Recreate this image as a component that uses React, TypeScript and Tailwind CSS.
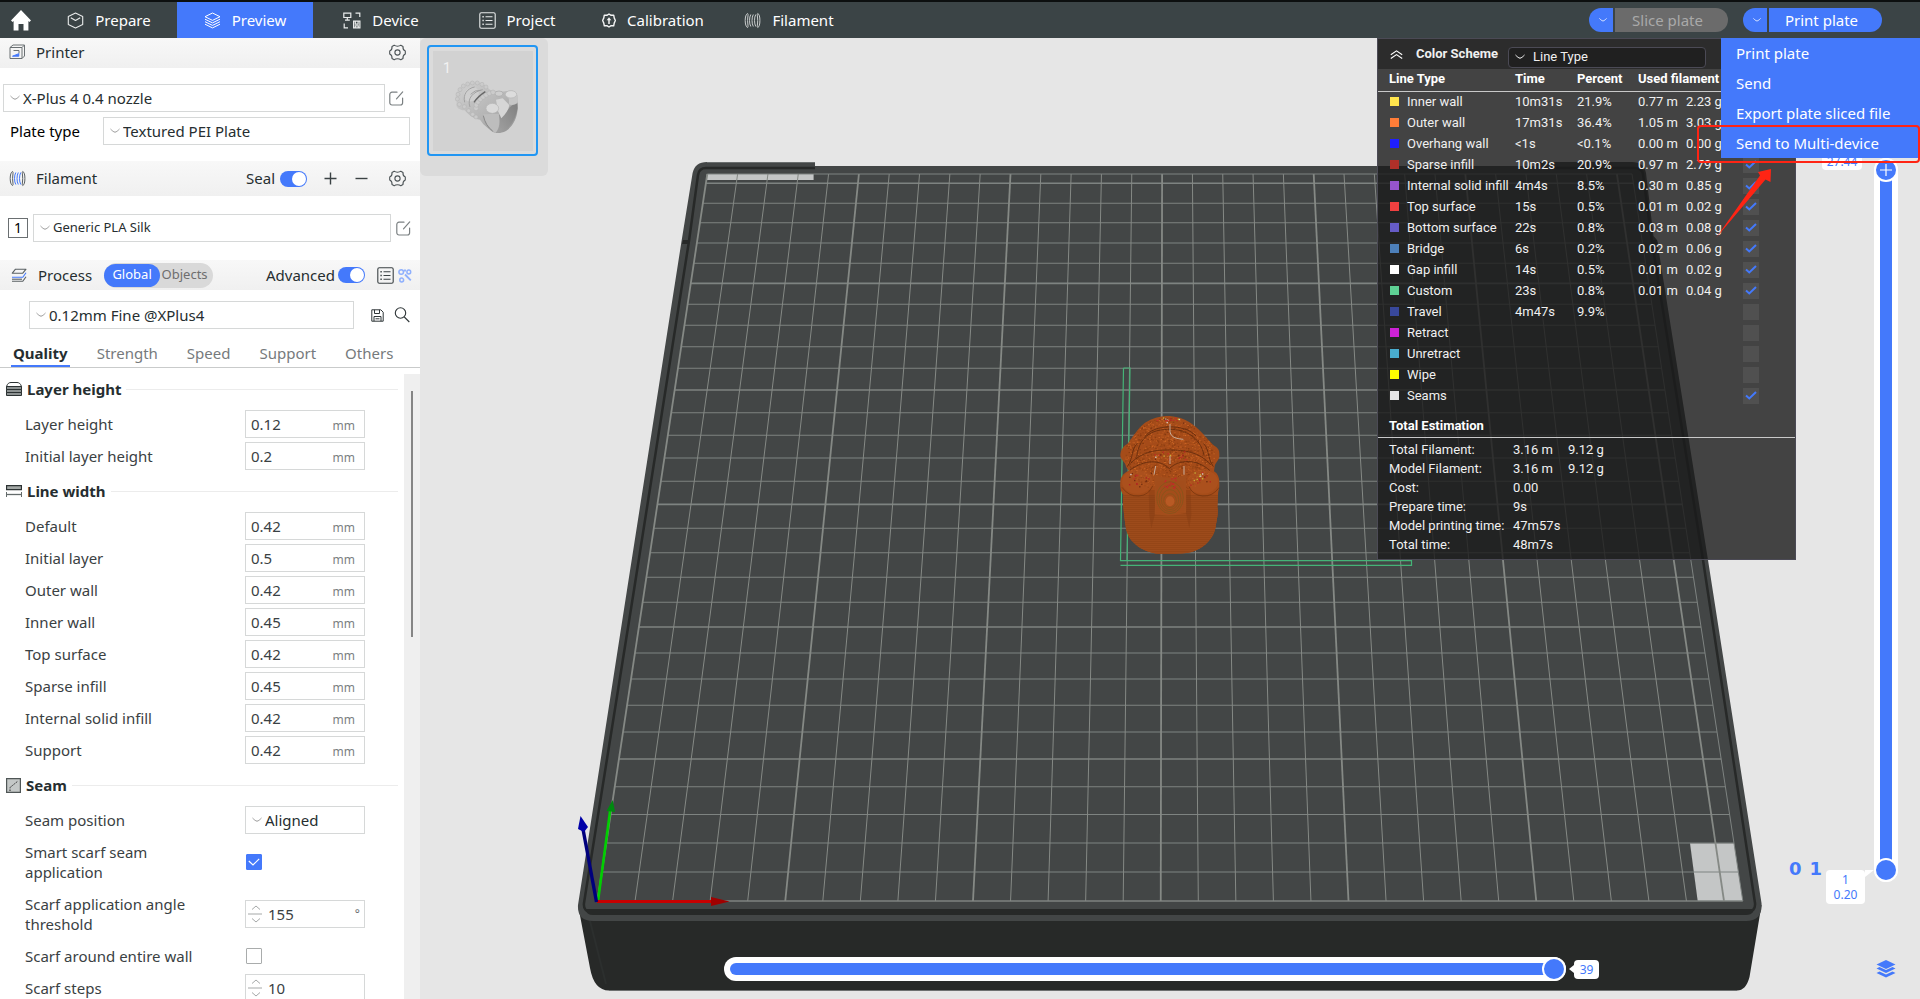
import React from "react";

/* ---------- icons ---------- */

type IconProps = { className?: string };

const HomeIcon = () => (
  <svg viewBox="0 0 20 21" className="h-[21px] w-5" fill="#fff">
    <path d="M10 0 20 10.500l-1.600 1.400-1-.9V20.500h-4.900v-6.500h-5V20.500H2.600V11l-1 .9L0 10.500z" />
  </svg>
);

const CubeIcon = () => (
  <svg viewBox="0 0 17 17" className="size-[17px]" fill="none" stroke="#e9ebeb" strokeWidth="1.1" strokeLinejoin="round">
    <path d="M8.500 1 15.700 4.400v8.200L8.500 16 1.300 12.600V4.400z" />
    <path d="M3.800 5.800 8.500 8.400l4.700-2.600" />
  </svg>
);

const StackIcon = () => (
  <svg viewBox="0 0 17 17" className="size-[17px]" fill="none" stroke="#fff" strokeWidth="1" strokeLinejoin="round">
    <path d="M8.500 1 16 4.700 8.500 8.400 1 4.700z" />
    <path d="M1 7.200l7.500 3.700L16 7.200M1 9.700l7.500 3.700L16 9.700M1 12.200l7.500 3.700 7.500-3.700" />
  </svg>
);

const DeviceIcon = () => (
  <svg viewBox="0 0 18 17" className="h-[17px] w-[18px]" fill="none" stroke="#e9ebeb" strokeWidth="1.2">
    <path d="M.8 1.200h7v4.300h-7zM4.300 5.500V8M2 8.200h4.800M12.500 1.200h4.300V5M1.200 11.500v4.300H5" />
    <path d="M10.600 9.200h6.300v6.600h-6.300zM12.300 9.200v3h2.800v-3M12.300 15.500v-1.600h3v1.600" />
  </svg>
);

const ListIcon = ({ className = "size-[17px] text-[#e9ebeb]" }: IconProps) => (
  <svg viewBox="0 0 17 17" className={className} fill="none" stroke="currentColor" strokeWidth="1.100">
    <rect x=".8" y=".8" width="15.400" height="15.400" rx="1.500" />
    <path d="M6.500 4.700h7M6.500 8.500h7M6.500 12.300h7" />
    <path d="M3.400 4.700h1.400M3.400 8.500h1.400M3.400 12.300h1.400" strokeWidth="1.500" />
  </svg>
);

const CalibrationIcon = () => (
  <svg viewBox="0 0 14 15" className="h-[15px] w-3.5" fill="none" stroke="#f4f5f5" strokeWidth="1.400">
    <path d="M4.900 2.300 7 1l2.100 1.300 2.600-.1.500 2.700 1.200 2.600-1.200 2.600-.5 2.700-2.600-.1L7 14l-2.100-1.300-2.600.1-.5-2.700L.6 7.500l1.200-2.600.5-2.700z" strokeLinejoin="round" />
    <path d="M7 11V6" strokeWidth="1.500" />
    <path d="M4.700 7.200 7 4.300l2.300 2.900z" fill="#f4f5f5" stroke="none" />
  </svg>
);

const SpoolIcon = ({ className = "text-[#c9cccc]", inner = "#c9cccc" }: { className?: string; inner?: string }) => (
  <svg viewBox="0 0 17 17" className={"size-[17px] " + className} fill="none" stroke="currentColor" strokeWidth="1">
    <path d="M3.600 1.500C2 2 1.200 5 1.200 8.500s.8 6.500 2.400 7c1-.5 0-3.500 0-7s1-6.500 0-7zM13.700 1.500c1.600.5 2.200 3.500 2.200 7s-.6 6.500-2.200 7c-.9-.5 0-3.500 0-7s-.9-6.500 0-7z" />
    <path d="M6.800 2.500c-1.700 2.500-1.700 9.500 0 12M9.300 2.500c-1.700 2.500-1.700 9.500 0 12M11.800 2.500c-1.700 2.500-1.700 9.500 0 12" stroke={inner} />
  </svg>
);

const PrinterIcon = () => (
  <svg viewBox="0 0 17 16" className="h-4 w-[17px]" fill="none" stroke="#6a7073" strokeWidth="1" strokeLinejoin="round">
    <path d="M1 3.500 4 1h11.500v11l-2.500 2.500H1zM1 3.500h12v11M13 3.500 15.500 1" />
    <path d="M4.500 6.500h5.500v3" />
    <path d="M3.500 12.200 9.800 9.700v2.500z" fill="#4479fb" stroke="#4479fb" />
  </svg>
);

const GearIcon = () => (
  <svg viewBox="0 0 17 17" className="size-[17px]" fill="none" stroke="#4c5356" strokeWidth="1.100" strokeLinejoin="round">
    <path d="M5.200 1.200c1 .9 2 1 3.300 1s2.300-.1 3.300-1l2.200 1.300c-.3 2.500.3 3.700 2.300 4.600v2.800c-2 .9-2.600 2.100-2.300 4.600l-2.200 1.300c-1-.9-2-1-3.300-1s-2.300.1-3.300 1L3 14.500C3.300 12 2.700 10.800.7 9.900V7.100C2.700 6.200 3.300 5 3 2.500z" />
    <circle cx="8.500" cy="8.500" r="2.600" />
  </svg>
);

const EditIcon = () => (
  <svg viewBox="0 0 15 15" className="size-[15px]" fill="none" stroke="#7b8082" strokeWidth="1.200" strokeLinecap="round">
    <path d="M8 1.200H3a2.200 2.200 0 0 0-2.200 2.200v8.400A2.200 2.200 0 0 0 3 14h8.400a2.200 2.200 0 0 0 2.200-2.200V7M13.700.9 7.500 7.800" />
  </svg>
);

const ProcessIcon = () => (
  <svg viewBox="0 0 16 15" className="h-[15px] w-4" fill="none" stroke="#5a6063" strokeWidth="1.100" strokeLinejoin="round">
    <path d="M4.500 1.200H15l-3.200 4H1.300z" />
    <path d="M15 4.700l-3.200 4.500H1" stroke="#4479fb" />
    <path d="M15 8.700l-3.200 4.600H1" />
    <path d="M1 11.200h10" />
  </svg>
);

const NodesIcon = () => (
  <svg viewBox="0 0 14 15" className="h-[15px] w-3.5" fill="none" stroke="#8fb0fd" strokeWidth="1.500">
    <circle cx="3.200" cy="4" r="2.300" />
    <circle cx="10.800" cy="4" r="1.900" />
    <circle cx="3.700" cy="12" r="1.900" />
    <path d="M7 1.500v2M7 6.500l5.800 5.800" strokeWidth="1.900" />
  </svg>
);

const SaveIcon = () => (
  <svg viewBox="0 0 13 13" className="size-[13px]" fill="none" stroke="#2f3638" strokeWidth="1">
    <path d="M.8.8h9l2.400 2.400v9H.8zM3.500.8v3.700h5V.8M3 12.200V7.500h7v4.700M4.500 9.800h4" />
  </svg>
);

const SearchIcon = () => (
  <svg viewBox="0 0 16 16" className="size-4" fill="none" stroke="#2f3638" strokeWidth="1.100">
    <circle cx="6.500" cy="6" r="5.200" />
    <path d="M10.300 10l5 5" />
  </svg>
);

const Chevron = ({ className = "h-1.5 w-2.5 text-[#9a9a9a]" }: IconProps) => (
  <svg viewBox="0 0 10 6" className={"shrink-0 " + className} fill="none" stroke="currentColor" strokeWidth="1">
    <path d="M.5 1C2 2.500 3.500 4 5 4.200 6.500 4 8 2.500 9.500 1" />
  </svg>
);

const LayerHeightIcon = () => (
  <svg viewBox="0 0 16 14" className="h-3.5 w-4" fill="#8d9292" stroke="#2c3233" strokeWidth="1">
    <path d="M.5 4.500C1.500 1.500 3 .5 5 .5h6c2 0 3.500 1 4.500 4z" fill="#fff" />
    <path d="M.5 4.500h15v3H.5zM.5 7.500h15v3H.5zM.5 10.500h15v3H.5z" />
  </svg>
);

const LineWidthIcon = () => (
  <svg viewBox="0 0 16 12" className="h-3 w-4" fill="none" stroke="#2c3233" strokeWidth="1">
    <path d="M.5.7h15v4H.5z" fill="#a3a8a6" strokeWidth="1.300" />
    <path d="M.5 7v5M15.500 7v5" stroke="#646b6b" />
    <path d="M1 9.500h14" stroke="#646b6b" strokeWidth="1.300" />
  </svg>
);

const SeamIcon = () => (
  <svg viewBox="0 0 15 15" className="size-[15px]">
    <path d="M.6.6h13.800v13.800H.6z" fill="#c4c8c7" stroke="#4f5656" strokeWidth="1.200" />
    <path d="M4 13V9.500L12 3" fill="none" stroke="#222" strokeWidth="1" strokeDasharray="1.500 1.200" />
  </svg>
);

const LayersSolidIcon = () => (
  <svg viewBox="0 0 20 18" className="h-[18px] w-5" fill="#4479fb">
    <path d="M10 0l9.500 4.500L10 9 .5 4.500z" />
    <path d="M.5 8.400l3-1.400L10 10l6.500-3 3 1.400L10 13z" />
    <path d="M.5 13l3-1.400L10 14.600l6.500-3 3 1.400L10 17.600z" />
  </svg>
);

/* ---------- small controls ---------- */

const Toggle = ({ label }: { label: string }) => (
  <input
    type="checkbox"
    role="switch"
    aria-label={label}
    defaultChecked
    className="h-4 w-[27px] appearance-none rounded-full bg-[#4479fb] p-px before:ml-auto before:block before:size-3.5 before:rounded-full before:bg-white before:content-['']"
  />
);

const Select = ({ label, value, className, id, text = "text-[15px]" }: { label: string; value: string; className: string; id?: string; text?: string }) => (
  <div className={"flex h-7 items-center gap-[3px] border border-[#d6d8d8] bg-white pl-1.5 " + className}>
    <Chevron />
    <select id={id} aria-label={label} className={"h-full min-w-0 flex-1 appearance-none bg-transparent text-[#262e30] outline-none " + text}>
      <option>{value}</option>
    </select>
  </div>
);

const Check = ({ id, checked }: { id: string; checked: boolean }) => (
  <span className="ml-px grid size-4 place-items-center">
    <input
      id={id}
      type="checkbox"
      defaultChecked={checked}
      className="col-start-1 row-start-1 size-4 appearance-none rounded-[1px] border border-[#a9acac] bg-white checked:border-[#4479fb] checked:bg-[#4479fb]"
    />
    {checked && (
      <svg viewBox="0 0 12 8" className="pointer-events-none col-start-1 row-start-1 h-2 w-3" fill="none" stroke="#fff" strokeWidth="1.200">
        <path d="M.8 3 5 7 11.200.8" />
      </svg>
    )}
  </span>
);

const Spin = ({ id, value, unit }: { id: string; value: string; unit?: string }) => (
  <div className="flex h-7 w-[120px] items-center border border-[#d6d8d8] bg-white pr-1 pl-0.5">
    <svg viewBox="0 0 14 22" className="h-[22px] w-3.5" fill="none" stroke="#a5a8a8" strokeWidth="1">
      <path d="M4 6.500 8 3l4 3.500M4 15.500 8 19l4-3.500M0 11h14" />
    </svg>
    <input id={id} defaultValue={value} className="ml-1.5 w-16 min-w-0 flex-1 bg-transparent text-[15px] outline-none" />
    {unit && <span className="text-xs leading-3 text-[#6b7072]">{unit}</span>}
  </div>
);

const NumberField = ({ id, value }: { id: string; value: string }) => (
  <div className="flex h-7 w-[120px] items-center border border-[#d6d8d8] bg-white pr-[9px] pl-[5px]">
    <input id={id} defaultValue={value} className="w-16 min-w-0 flex-1 bg-transparent text-[15px] outline-none" />
    <span className="pt-1 text-xs text-[#7b8082]">mm</span>
  </div>
);

const Row = ({ id, label, tall, children }: { id: string; label: string; tall?: boolean; children: React.ReactNode }) => (
  <div className={"flex items-center pl-[25px] " + (tall ? "h-12" : "h-7")}>
    <label htmlFor={id} className="w-[220px] shrink-0 pr-10 leading-5 whitespace-normal">
      {label}
    </label>
    {children}
  </div>
);

const Group = ({ icon, title, children }: { icon: React.ReactNode; title: string; children: React.ReactNode }) => (
  <section>
    <h3 className="flex h-[42px] items-center pr-1.5 pl-1.5 font-bold text-[#262e30]">
      {icon}
      <span className="pr-[5px] pl-[5px]">{title}</span>
      <span className="h-px flex-1 bg-[#ececec]" />
    </h3>
    <div className="flex flex-col gap-1">{children}</div>
  </section>
);

/* ---------- header ---------- */

const TABS = [
  { name: "Prepare", icon: <CubeIcon /> },
  { name: "Preview", icon: <StackIcon /> },
  { name: "Device", icon: <DeviceIcon /> },
  { name: "Project", icon: <ListIcon /> },
  { name: "Calibration", icon: <CalibrationIcon /> },
  { name: "Filament", icon: <SpoolIcon /> },
];

const SplitButton = ({ label, disabled }: { label: string; disabled?: boolean }) => (
  <div className="flex gap-0.5">
    <button aria-label={label + " options"} className="flex h-6 w-6 items-center justify-center rounded-l-full bg-[#4479fb] pl-1 text-white">
      <Chevron className="h-1.5 w-2" />
    </button>
    <button
      disabled={disabled}
      className={"h-6 w-[113px] rounded-r-full pr-2 text-[15px] leading-6 " + (disabled ? "bg-[#6b6b6b] text-[#a9a9a9]" : "bg-[#4479fb] text-white")}
    >
      {label}
    </button>
  </div>
);

const Header = () => (
  <header className="flex h-[38px] shrink-0 items-stretch border-t-2 border-[#0c0f0f] bg-[#3b4446] text-[15px] text-white">
    <button aria-label="Home" className="flex w-[41px] items-center justify-center">
      <HomeIcon />
    </button>
    <nav className="flex">
      {TABS.map((t) => (
        <button key={t.name} className={"flex w-[136px] items-center justify-center gap-[11px] " + (t.name === "Preview" ? "bg-[#4479fb]" : "")}>
          {t.icon}
          {t.name}
        </button>
      ))}
    </nav>
    <div className="ml-auto flex items-center gap-[15px] pr-[38px]">
      <SplitButton label="Slice plate" disabled />
      <SplitButton label="Print plate" />
    </div>
  </header>
);

/* ---------- sidebar ---------- */

const BAND = "flex shrink-0 items-center bg-linear-to-b from-[#f8f8f8] to-[#f0f0f0] text-[#262e30]";
const TAB = "h-8 border-b-2 pt-1 leading-7";

const LINE_WIDTHS: [string, string][] = [
  ["Default", "0.42"],
  ["Initial layer", "0.5"],
  ["Outer wall", "0.42"],
  ["Inner wall", "0.45"],
  ["Top surface", "0.42"],
  ["Sparse infill", "0.45"],
  ["Internal solid infill", "0.42"],
  ["Support", "0.42"],
];

const Sidebar = () => (
  <aside className="flex w-[420px] shrink-0 flex-col overflow-hidden bg-white text-[15px] text-[#3a4143]">
    <div className={BAND + " h-[30px] pr-3.5 pb-0.5 pl-[9px]"}>
      <PrinterIcon />
      <h2 className="flex-1 pl-2.5">Printer</h2>
      <button aria-label="Printer settings">
        <GearIcon />
      </button>
    </div>
    <div className="flex flex-col gap-[5px] py-4">
      <div className="flex items-center gap-1 pl-[3px]">
        <Select label="Printer preset" value="X-Plus 4 0.4 nozzle" className="w-[382px]" />
        <button aria-label="Edit printer preset">
          <EditIcon />
        </button>
      </div>
      <div className="flex items-center pl-2.5">
        <label htmlFor="plate" className="w-[93px] text-black">
          Plate type
        </label>
        <Select id="plate" label="Plate type" value="Textured PEI Plate" className="w-[307px]" />
      </div>
    </div>

    <div className={BAND + " h-[35px] pr-3.5 pl-[9px]"}>
      <SpoolIcon className="text-[#5a6063]" inner="#4479fb" />
      <h2 className="flex-1 pl-2.5">Filament</h2>
      <span className="pr-[5px]">Seal</span>
      <Toggle label="Seal" />
      <button aria-label="Add filament" className="ml-[17px]">
        <svg viewBox="0 0 13 13" className="size-[13px]" stroke="#3b4244" strokeWidth="1.400">
          <path d="M.5 6.500h12M6.500.5v12" />
        </svg>
      </button>
      <button aria-label="Remove filament" className="mr-[21px] ml-[18px]">
        <svg viewBox="0 0 13 13" className="size-[13px]" stroke="#3b4244" strokeWidth="1.400">
          <path d="M.5 6.500h12" />
        </svg>
      </button>
      <button aria-label="Filament settings">
        <GearIcon />
      </button>
    </div>
    <div className="flex items-center py-[18px] pl-2">
      <span className="mr-[5px] flex size-5 items-center justify-center border border-[#6a6f71] text-sm leading-4 text-black">1</span>
      <Select label="Filament preset" value="Generic PLA Silk" className="mr-[5px] w-[358px]" text="text-[13px]" />
      <button aria-label="Edit filament preset">
        <EditIcon />
      </button>
    </div>

    <div className={BAND + " h-[30px] pr-2 pl-[11px]"}>
      <ProcessIcon />
      <h2 className="pl-[11px]">Process</h2>
      <div className="ml-3 flex h-[25px] w-[109px] items-center rounded-full bg-[#d9d9d9] text-[13px]">
        <button className="h-[23px] w-14 rounded-full bg-[#4479fb] text-white">Global</button>
        <button className="flex-1 pr-1 text-[#6e6e6e]">Objects</button>
      </div>
      <span className="mr-[3px] ml-auto">Advanced</span>
      <Toggle label="Advanced" />
      <button aria-label="Parameter list" className="mr-1 ml-3">
        <ListIcon className="size-[17px] text-[#3b4244]" />
      </button>
      <button aria-label="Compare presets">
        <NodesIcon />
      </button>
    </div>
    <div className="flex items-center pt-[11px] pl-[29px]">
      <Select label="Process preset" value="0.12mm Fine @XPlus4" className="mr-[17px] w-[325px]" />
      <button aria-label="Save preset" className="mr-2.5">
        <SaveIcon />
      </button>
      <button aria-label="Search settings">
        <SearchIcon />
      </button>
    </div>
    <nav className="flex h-[39px] shrink-0 items-end gap-[27px] border-b border-[#c9cbcb] pl-[11px] text-[#767a7c]">
      <button className={TAB + " border-[#4479fb] px-0.5 font-bold text-[#262e30]"}>Quality</button>
      <button className={TAB + " border-transparent"}>Strength</button>
      <button className={TAB + " border-transparent pl-0.5"}>Speed</button>
      <button className={TAB + " border-transparent pl-0.5"}>Support</button>
      <button className={TAB + " border-transparent pl-0.5"}>Others</button>
    </nav>

    <div className="flex min-h-0 flex-1">
      <div className="min-w-0 flex-1 overflow-hidden">
        <Group icon={<LayerHeightIcon />} title="Layer height">
          <Row id="lh" label="Layer height">
            <NumberField id="lh" value="0.12" />
          </Row>
          <Row id="ilh" label="Initial layer height">
            <NumberField id="ilh" value="0.2" />
          </Row>
        </Group>
        <Group icon={<LineWidthIcon />} title="Line width">
          {LINE_WIDTHS.map(([name, value]) => (
            <Row key={name} id={"w-" + name} label={name}>
              <NumberField id={"w-" + name} value={value} />
            </Row>
          ))}
        </Group>
        <Group icon={<SeamIcon />} title="Seam">
          <Row id="seam" label="Seam position">
            <Select id="seam" label="Seam position" value="Aligned" className="w-[120px]" />
          </Row>
          <Row id="smart" label="Smart scarf seam application" tall>
            <Check id="smart" checked />
          </Row>
          <Row id="angle" label="Scarf application angle threshold" tall>
            <Spin id="angle" value="155" unit="°" />
          </Row>
          <Row id="around" label="Scarf around entire wall">
            <Check id="around" checked={false} />
          </Row>
          <Row id="steps" label="Scarf steps">
            <Spin id="steps" value="10" />
          </Row>
        </Group>
      </div>
      <div className="mt-1.5 flex w-4 justify-center bg-[#efefef]">
        <div className="mt-[17px] h-[246px] w-0.5 bg-[#858585]" />
      </div>
    </div>
  </aside>
);

/* ---------- build plate ---------- */

const GRID_Y = [
  901, 872, 843, 814.500, 786.700, 759, 732, 705.300, 679, 653, 627, 602.300, 577.200, 552.700, 528.300, 504.400, 481.300, 458, 435.300, 412.700, 390, 368.300, 346.700,
  325.300, 304.300, 283.400, 263.300, 243, 222.700, 203.300, 183.300,
];
const leftAt = (y: number) => 707.3 - ((y - 174) / 727) * 109.8;
const rightAt = (y: number) => 1632 + ((y - 174) / 727) * 110.8;

const noise = (n: number) => {
  const v = Math.sin(n * 127.1) * 43758.5453;
  return v - Math.floor(v);
};
const TONES = ["#d9702c", "#8a3f14", "#b85a20", "#7a3510", "#c96024"];
const specks = Array.from({ length: 1300 }, (_, i) => {
  const a = noise(i + 1) * Math.PI * 2;
  const r = Math.sqrt(noise(i + 500));
  return { x: 237 + Math.cos(a) * r * 134, y: 165 + Math.sin(a) * r * 112, c: TONES[i % 5] };
}).filter((s) => s.y < 275);
const brights = Array.from({ length: 90 }, (_, i) => {
  const spots = [
    [147, 237, 36, 22],
    [332, 237, 36, 22],
    [240, 247, 18, 16],
    [240, 165, 48, 12],
    [240, 62, 40, 10],
  ];
  const [cx, cy, rx, ry] = spots[i % 5];
  return {
    x: cx + (noise(i + 7) - 0.5) * 2 * rx,
    y: cy + (noise(i + 77) - 0.5) * 2 * ry,
    c: i % 5 === 2 ? "#c22a2a" : ["#d8d2cc", "#c22a2a", "#6b2a10", "#b02222", "#c9b43a"][Math.floor(noise(i + 3) * 5)],
  };
});

const PrintedModel = () => (
  <g transform="translate(1090 400) scale(.33333)">
    <defs>
      <pattern id="layers" width="8" height="6" patternUnits="userSpaceOnUse">
        <path d="M0 1.500h8" stroke="#a85120" strokeWidth="2" opacity=".55" />
      </pattern>
      <clipPath id="body">
        <path d="M238 48C270 50 300 62 330 92 350 112 365 132 374 138 388 145 390 160 388 172 384 184 376 188 374 200L372 214C386 222 390 240 388 262 382 280 384 300 382 320 386 340 380 360 376 385 370 415 345 440 320 450 300 460 280 460 258 461H215C190 462 165 452 145 440 120 422 112 405 108 385 102 350 98 310 100 285 88 270 90 250 92 238 96 222 110 215 116 212L108 200C106 185 92 182 91 165 92 150 100 138 112 132 130 110 140 88 165 68 190 52 215 46 238 48z" />
      </clipPath>
    </defs>
    <g clipPath="url(#body)">
      <path d="M80 40h320v430H80z" fill="#a54c19" />
      <path d="M80 285h320v190H80z" fill="#954617" />
      <path d="M80 285h320v190H80z" fill="url(#layers)" />
      <path d="M176 270h26l-4 60-14 55-6-40zM302 270h-20l4 60 12 55 6-40z" fill="#7d3811" opacity=".35" />
      {specks.map((s, i) => (
        <rect key={i} x={s.x} y={s.y} width="4" height="3" fill={s.c} opacity=".7" />
      ))}
      <g fill="none" stroke="#5e290c" strokeWidth="3" opacity=".8">
        <path d="M140 170C150 100 195 88 240 88S330 110 342 165" />
        <path d="M122 190C160 152 200 150 240 150S330 155 362 195" />
        <path d="M120 210C165 178 210 178 238 206 266 178 320 175 360 212" />
        <path d="M165 110C190 72 285 70 318 108M112 200c20-30 10-50 30-70M370 200c-20-30-10-50-30-70" />
      </g>
      <ellipse cx="142" cy="245" rx="46" ry="36" fill="#b55822" opacity=".4" />
      <ellipse cx="338" cy="245" rx="46" ry="36" fill="#b55822" opacity=".4" />
      <path d="M96 262q20 28 50 26t42-30M388 262q-20 28-50 26t-42-30" fill="none" stroke="#6d300e" strokeWidth="3" opacity=".6" />
      <path d="M192 222q48 24 98 0c-4 40 0 80-2 116q-46 14-94 4c2-40 0-80-2-120z" fill="#a34e1c" />
      <g fill="none" stroke="#6f5a1a" strokeWidth="2" opacity=".7">
        <ellipse cx="240" cy="302" rx="19" ry="21" />
        <ellipse cx="240" cy="299" rx="26" ry="30" />
        <ellipse cx="240" cy="296" rx="33" ry="39" />
        <ellipse cx="240" cy="293" rx="40" ry="48" />
      </g>
      <ellipse cx="240" cy="304" rx="13" ry="15" fill="#b85a24" />
      {brights.map((s, i) => (
        <rect key={i} x={s.x} y={s.y} width="4" height="4" fill={s.c} />
      ))}
      <path d="M240 72v24c4 18 22 20 40 22M240 168v24M197 198l-5 26M282 198v26" fill="none" stroke="#cfc5bd" strokeWidth="2.500" />
    </g>
  </g>
);

const Scene = () => (
  <svg viewBox="420 38 1500 961" preserveAspectRatio="xMidYMid slice" className="absolute inset-0 size-full" aria-hidden="true">
    {/* tray body */}
    <path d="M578 905 590 968Q594 990.500 609 990.500H1737Q1746 990.500 1749.500 977L1761.500 905z" fill="#272928" />
    <path d="M609 990.500H1737" stroke="#6d7070" />
    <path d="M590 921 606 984" stroke="#2c2f2e" strokeWidth="2" />
    <path
      d="M707 162H815V166H1535V162H1632Q1644 162 1646 173L1653.500 236 1657 240 1708 560 1761.500 903Q1763 921 1746 921H593Q577 921 578 905L597.500 780 627 590 681.400 242 692.600 173Q695 162 707 162z"
      fill="#434646"
    />
    <path d="M815 168H706Q699 168 698 175L689 241 634 590 584 903Q583 912 592 912H1746Q1756 912 1755 903L1703 560 1652 242 1643 174Q1642 168 1634 168H1552" fill="none" stroke="#272928" strokeWidth="2.500" />
    <path d="M586 909H1753L1753 912Q1751 915 1746 915H593Q586 915 586 909z" fill="#272928" />
    <path d="M683 240h6l-1 4h-6zM1651 240h6l1 4h-6z" fill="#272928" />
    <path d="M707 162.500H815" stroke="#6a6e6e" />

    {/* corner patches */}
    <path d="M707 174H813.600V180H706z" fill="#c4c6c6" />
    <path d="M1690 843.300H1734L1742.800 901H1697.700z" fill="#c4c6c6" />

    {/* grid */}
    <g fill="none">
      {GRID_Y.map((y, i) => (
        <path key={y} d={`M${leftAt(y)} ${y}H${rightAt(y)}`} stroke="#7e8381" strokeWidth={i % 5 === 0 ? 1.6 : 1.1} />
      ))}
      {Array.from({ length: 31 }, (_, i) => (
        <path key={i} d={`M${707.3 + 30.32 * i} 174L${597.5 + 37.55 * i} 901`} stroke="#858985" strokeWidth={i % 5 === 0 ? 1.8 : 1} />
      ))}
      <path d="M707.300 174H1632L1742.800 901" stroke="#7e8381" />
    </g>

    {/* purge line and prime outline */}
    <path d="M1123.500 368H1130L1127 560.500M1123.500 368 1120.500 560.700H1411.500V565.300H1120.500" fill="none" stroke="#45b377" strokeWidth="1.200" />
    <PrintedModel />

    {/* axes */}
    <path d="M598 901 610.500 808" stroke="#00cf00" strokeWidth="2.600" />
    <path d="M612.700 800 615 812 606.500 811z" fill="#008a10" />
    <path d="M597 901.500H712" stroke="#c80000" strokeWidth="3.200" />
    <path d="M729.600 901.500 711 897v9z" fill="#a00000" />
    <path d="M596.500 902 583 829" stroke="#00007c" strokeWidth="3.400" />
    <path d="M580.500 816 588 827 584 832 578 829z" fill="#0000a8" />
  </svg>
);

const BEADS = [
  [84, 118],
  [90, 104],
  [100, 93],
  [113, 87],
  [127, 84],
  [142, 84],
  [156, 88],
  [168, 96],
  [82, 132],
  [88, 148],
  [103, 155],
  [116, 167],
  [128, 178],
  [138, 186],
];
const COLLAR = [
  [138, 160],
  [139, 150],
  [144, 141],
  [151, 133],
  [159, 126],
  [168, 120],
  [178, 115],
  [189, 112],
];

const StoneModel = () => (
  <g transform="translate(-3 4) scale(.33333)">
    <defs>
      <linearGradient id="stone" x1="0" y1="0" x2="1" y2="1">
        <stop offset="0" stopColor="#d2d2d2" />
        <stop offset=".55" stopColor="#b5b5b5" />
        <stop offset="1" stopColor="#8e8e8e" />
      </linearGradient>
      <linearGradient id="base" x1="0" y1="1" x2="1" y2="0">
        <stop offset="0" stopColor="#a2a2a2" />
        <stop offset="1" stopColor="#7f7f7f" />
      </linearGradient>
    </defs>
    <path
      d="M77 122C80 104 92 90 110 86 130 80 150 82 164 90L180 104C190 112 200 108 208 108 222 112 226 106 240 107 256 106 262 114 262 126L263 160C262 190 248 215 228 228 210 236 196 236 184 228L160 208 150 194C130 192 116 180 104 166 84 164 76 154 80 144z"
      fill="url(#stone)"
    />
    <path d="M205 180C212 205 208 225 198 234 232 232 256 200 263 160L262 140C245 150 235 160 228 170z" fill="url(#base)" />
    <path d="M198 134 218 130 238 150C236 165 226 178 214 190L204 168z" fill="#d6d6d6" />
    <path d="M160 178C166 200 176 222 196 234 210 220 210 196 206 176z" fill="#bdbdbd" />
    <path d="M160 182q6 30 28 46" fill="none" stroke="#8a8a8a" strokeWidth="3" />
    <path d="M236 148q4-20-8-32 26-16 36 8l-1 20q-14 10-27 4z" fill="#c6c6c6" />
    <ellipse cx="187" cy="160" rx="19" ry="15" fill="#dadada" stroke="#b4b4b4" strokeWidth="2" />
    <ellipse cx="243" cy="118" rx="17" ry="11" fill="#dcdcdc" stroke="#b6b6b6" strokeWidth="2" />
    <ellipse cx="207" cy="116" rx="12" ry="8" fill="#cecece" stroke="#a8a8a8" strokeWidth="2" />
    <ellipse cx="124" cy="118" rx="24" ry="20" fill="#cfcfcf" transform="rotate(-40 124 118)" />
    <g fill="#cbcbcb" stroke="#b2b2b2" strokeWidth="1.500">
      {BEADS.map(([x, y]) => (
        <circle key={x + "-" + y} cx={x} cy={y} r="6" />
      ))}
      {COLLAR.map(([x, y]) => (
        <circle key={x + "-" + y} cx={x} cy={y} r="7" />
      ))}
    </g>
    <g fill="none" stroke="#a2a2a2" strokeWidth="3">
      <path d="M104 142C98 118 112 100 134 96M120 156C110 130 130 110 158 104" />
      <path d="M122 118q12-14 30-12" />
    </g>
    <path d="M132 142Q144 124 166 110" fill="none" stroke="#666" strokeWidth="4" />
  </g>
);

const Thumbnail = () => (
  <button aria-label="Plate 1" className="absolute top-0 left-0 flex h-[138px] w-32 items-start rounded-md bg-[#dbdbdb] pt-[7px] pl-[7px]">
    <span className="flex size-[111px] items-center justify-center rounded border-2 border-[#2196f3]">
      <svg viewBox="0 0 100 100" className="size-[100px] bg-[#d2d2d2]">
        <text x="10" y="22" fill="#f2f2f2" fontSize="14" fontFamily="Roboto, sans-serif">
          1
        </text>
        <StoneModel />
      </svg>
    </span>
  </button>
);

/* ---------- legend ---------- */

const LEGEND: { c: string; n: string; t?: string; p?: string; m?: string; g?: string; on: boolean }[] = [
  { c: "#ffe54d", n: "Inner wall", t: "10m31s", p: "21.9%", m: "0.77 m", g: "2.23 g", on: true },
  { c: "#ff7d38", n: "Outer wall", t: "17m31s", p: "36.4%", m: "1.05 m", g: "3.03 g", on: true },
  { c: "#1f1fff", n: "Overhang wall", t: "<1s", p: "<0.1%", m: "0.00 m", g: "0.00 g", on: true },
  { c: "#b03029", n: "Sparse infill", t: "10m2s", p: "20.9%", m: "0.97 m", g: "2.79 g", on: true },
  { c: "#9654cc", n: "Internal solid infill", t: "4m4s", p: "8.5%", m: "0.30 m", g: "0.85 g", on: true },
  { c: "#f04040", n: "Top surface", t: "15s", p: "0.5%", m: "0.01 m", g: "0.02 g", on: true },
  { c: "#665cc7", n: "Bottom surface", t: "22s", p: "0.8%", m: "0.03 m", g: "0.08 g", on: true },
  { c: "#4d80ba", n: "Bridge", t: "6s", p: "0.2%", m: "0.02 m", g: "0.06 g", on: true },
  { c: "#ffffff", n: "Gap infill", t: "14s", p: "0.5%", m: "0.01 m", g: "0.02 g", on: true },
  { c: "#5ed194", n: "Custom", t: "23s", p: "0.8%", m: "0.01 m", g: "0.04 g", on: true },
  { c: "#38489b", n: "Travel", t: "4m47s", p: "9.9%", on: false },
  { c: "#cd22d6", n: "Retract", on: false },
  { c: "#49adcf", n: "Unretract", on: false },
  { c: "#ffff00", n: "Wipe", on: false },
  { c: "#e6e6e6", n: "Seams", on: true },
];

const TOTALS: [string, string, string?][] = [
  ["Total Filament:", "3.16 m", "9.12 g"],
  ["Model Filament:", "3.16 m", "9.12 g"],
  ["Cost:", "0.00"],
  ["Prepare time:", "9s"],
  ["Model printing time:", "47m57s"],
  ["Total time:", "48m7s"],
];

const Legend = () => (
  <div className="absolute top-0 right-[124px] w-[419px] border border-[#4b4a55] bg-[#1a1a1a]/80 font-[Roboto,sans-serif] text-[13px] text-[#f0f0f0]">
    <div className="flex h-[30px] items-center bg-[#222]/70 pl-3">
      <button aria-label="Collapse legend">
        <svg viewBox="0 0 13 9" className="h-[9px] w-[13px]" fill="none" stroke="#fff" strokeWidth="1.100">
          <path d="M.8 4.700 6.500.8l5.700 3.900M.8 8.500l5.700-3.900 5.700 3.900" />
        </svg>
      </button>
      <label htmlFor="scheme" className="w-[92px] pl-[13px] font-bold whitespace-nowrap">
        Color Scheme
      </label>
      <div className="mt-1.5 ml-[13px] flex h-[21px] w-[198px] items-center rounded border border-[#4b4a55] bg-[#202020] pl-1.5">
        <Chevron className="h-1.5 w-2.5 text-white" />
        <select id="scheme" className="flex-1 appearance-none bg-transparent pl-2 outline-none">
          <option>Line Type</option>
        </select>
      </div>
    </div>
    <table className="w-full table-fixed text-left leading-5 whitespace-nowrap">
      <colgroup>
        <col className="w-[137px]" />
        <col className="w-[62px]" />
        <col className="w-[61px]" />
        <col className="w-12" />
        <col className="w-[57px]" />
        <col />
      </colgroup>
      <thead>
        <tr className="h-[22px] border-b border-[#c9c9c9] align-top leading-[19px] text-white">
          <th className="py-0 pl-[11px]">Line Type</th>
          <th className="p-0">Time</th>
          <th className="p-0">Percent</th>
          <th className="p-0" colSpan={2}>
            Used filament
          </th>
          <th />
        </tr>
      </thead>
      <tbody>
        {LEGEND.map((r, i) => (
          <tr key={r.n} className="h-[21px]">
            <td className="py-0 pl-3">
              <label htmlFor={"show-" + i} className="flex items-center gap-2">
                <span className="size-[9px]" style={{ backgroundColor: r.c }} />
                {r.n}
              </label>
            </td>
            <td className="p-0">{r.t}</td>
            <td className="p-0">{r.p}</td>
            <td className="p-0">{r.m}</td>
            <td className="p-0">{r.g}</td>
            <td className="p-0">
              <span className="grid size-4 place-items-center">
                <input id={"show-" + i} type="checkbox" defaultChecked={r.on} className="col-start-1 row-start-1 size-4 appearance-none bg-[#505050]" />
                {r.on && (
                  <svg viewBox="0 0 12 9" className="pointer-events-none col-start-1 row-start-1 h-[9px] w-3" fill="none" stroke="#4479fb" strokeWidth="2">
                    <path d="M1 4.500 4.300 7.500 11 1" />
                  </svg>
                )}
              </span>
            </td>
          </tr>
        ))}
      </tbody>
    </table>
    <h4 className="flex h-8 items-end border-b border-[#c9c9c9] pb-px pl-[11px] leading-5 font-bold text-white">Total Estimation</h4>
    <table className="mt-0.5 mb-[5px] text-left leading-[19px] whitespace-nowrap">
      <tbody>
        {TOTALS.map(([k, a, b]) => (
          <tr key={k}>
            <th className="w-[135px] p-0 pl-[11px] font-normal">{k}</th>
            <td className="w-[55px] p-0">{a}</td>
            <td className="p-0">{b}</td>
          </tr>
        ))}
      </tbody>
    </table>
  </div>
);

/* ---------- sliders ---------- */

const V_RANGE =
  "col-start-1 row-start-1 h-full w-6 appearance-none bg-transparent [writing-mode:vertical-lr] [direction:rtl] [&::-webkit-slider-thumb]:size-6 [&::-webkit-slider-thumb]:appearance-none [&::-webkit-slider-thumb]:rounded-full [&::-webkit-slider-thumb]:border-2 [&::-webkit-slider-thumb]:border-white [&::-webkit-slider-thumb]:bg-[#4479fb]";

const Sliders = () => (
  <>
    <div className="absolute top-[120px] right-[22px] bottom-[117px] grid w-6 justify-items-center rounded-full bg-white">
      <span className="col-start-1 row-start-1 my-3 w-3 bg-[#4479fb]" />
      <input type="range" aria-label="Lowest layer" min={1} max={228} defaultValue={1} className={V_RANGE} />
      <input type="range" aria-label="Highest layer" min={1} max={228} defaultValue={228} className={V_RANGE} />
      <svg viewBox="0 0 24 24" className="pointer-events-none col-start-1 row-start-1 size-6" stroke="#fff" strokeWidth="1.200">
        <path d="M6 12h12M12 6v12" />
      </svg>
    </div>
    <div className="absolute top-[116px] right-[58px] w-10 rounded-sm bg-white text-center text-xs leading-4 text-[#4479fb]">27.44</div>
    <div className="absolute right-[55px] bottom-[95px] w-[39px] rounded-sm bg-white py-0.5 text-center text-xs leading-[15px] text-[#4479fb]">
      1
      <br />
      0.20
      <svg viewBox="0 0 10 7" className="absolute top-0 left-full h-[7px] w-2.5" fill="#fff">
        <path d="M0 0H9L0 7z" />
      </svg>
    </div>
    <div className="absolute right-[98px] bottom-[118px] flex gap-2 font-['DejaVu_Sans',sans-serif] text-lg leading-[25px] font-bold text-[#4479fb]">
      <span>0</span>
      <span>1</span>
    </div>
    <div className="absolute bottom-[18px] left-[304px] flex items-center">
      <input
        type="range"
        aria-label="Move"
        min={0}
        max={39}
        defaultValue={39}
        className="h-6 w-[842px] appearance-none rounded-full bg-white pl-1.5 [&::-webkit-slider-runnable-track]:h-3 [&::-webkit-slider-runnable-track]:rounded-full [&::-webkit-slider-runnable-track]:bg-[#4479fb] [&::-webkit-slider-thumb]:-mt-1.5 [&::-webkit-slider-thumb]:size-6 [&::-webkit-slider-thumb]:appearance-none [&::-webkit-slider-thumb]:rounded-full [&::-webkit-slider-thumb]:border-2 [&::-webkit-slider-thumb]:border-white [&::-webkit-slider-thumb]:bg-[#4479fb]"
      />
      <svg viewBox="0 0 5 8" className="ml-[3px] h-2 w-[5px]" fill="#fff">
        <path d="M5 0v8L0 4z" />
      </svg>
      <output className="w-[25px] rounded-sm bg-white text-center text-xs leading-[19px] text-[#4479fb]">39</output>
    </div>
    <button aria-label="Layer view" className="absolute right-6 bottom-[21px]">
      <LayersSolidIcon />
    </button>
  </>
);

/* ---------- open menu and highlight ---------- */

const PrintMenu = () => (
  <div role="menu" className="absolute top-0 right-0 flex w-[199px] flex-col bg-[#4479fb] text-[15px] text-white">
    {["Print plate", "Send", "Export plate sliced file", "Send to Multi-device"].map((t) => (
      <button key={t} role="menuitem" className="h-[30px] pl-[15px] text-left whitespace-nowrap">
        {t}
      </button>
    ))}
  </div>
);

const Highlight = () => (
  <>
    <div className="pointer-events-none absolute top-[87px] right-0 h-[38px] w-[223px] rounded-sm border-2 border-[#ff2414]" />
    <svg viewBox="0 0 56 70" className="pointer-events-none absolute top-[131px] right-[148px] h-[70px] w-14" fill="#ff2414">
      <path d="M55 0 54.500 13 49.500 10.500 0 69 44 6.500 42 3z" />
    </svg>
  </>
);

export default function App() {
  return (
    <div className="flex h-screen flex-col overflow-hidden font-['Noto_Sans','Open_Sans',sans-serif]">
      <Header />
      <div className="flex min-h-0 flex-1">
        <Sidebar />
        <main className="relative min-w-0 flex-1 overflow-hidden bg-[#e6e6e6]">
          <Scene />
          <Thumbnail />
          <Legend />
          <Sliders />
          <PrintMenu />
          <Highlight />
        </main>
      </div>
    </div>
  );
}
